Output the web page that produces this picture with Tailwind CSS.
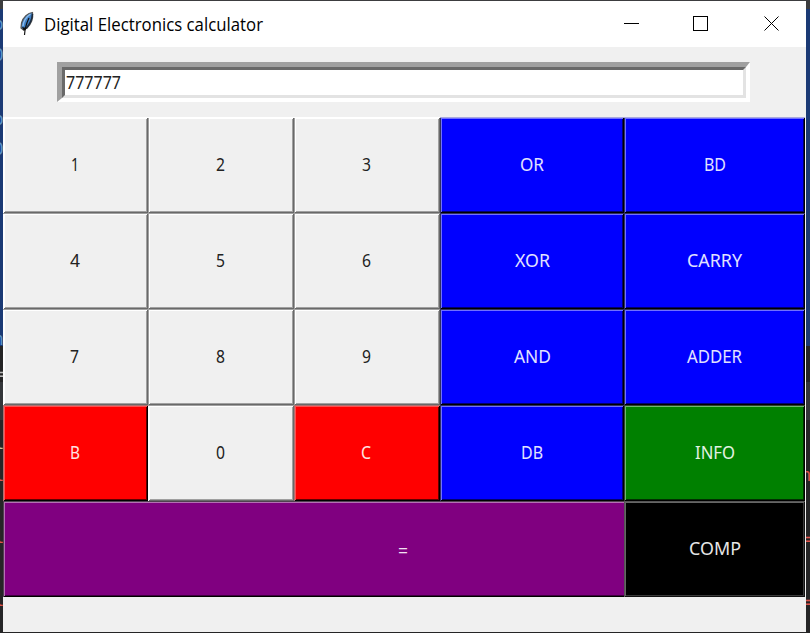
<!DOCTYPE html>
<html lang="en">
<head>
<meta charset="utf-8">
<title>Digital Electronics calculator</title>
<script src="https://cdn.jsdelivr.net/npm/@tailwindcss/browser@4"></script>
</head>
<body class="w-[810px] h-[633px] overflow-hidden bg-[#252526] font-['Noto_Sans','Open_Sans',sans-serif]">
<div class="relative w-[810px] h-[633px] overflow-hidden">
  <!-- editor behind the window -->
  <svg class="absolute inset-0" width="810" height="633" font-family="DejaVu Sans Mono, monospace" font-size="17">
    <rect width="810" height="633" fill="#252526"/>
    <rect width="810" height="9" fill="#3c3d3f"/>
    <rect y="9" width="810" height="337" fill="#1b3a75"/>
    <rect y="382" width="810" height="38" fill="#34363a"/>
    <g fill="#5c94c8"><text x="-6.500" y="30">o</text><text x="-6.500" y="61">0</text><text x="-6.500" y="125">o</text><text x="-6.500" y="155">0</text><text x="-6.500" y="345">n</text></g>
    <text x="-6" y="380" fill="#b9b9b9">=</text><text x="-6" y="449" fill="#c8c0a0">l</text>
    <g fill="#e0564e"><text x="-6" y="481">l</text><text x="-6" y="543">l</text><text x="-6" y="606">l</text><text x="801" y="481">n</text><text x="805" y="545">=</text><text x="805" y="608">=</text></g>
  </svg>
  <main class="relative ml-[3px] mt-px w-[803px] h-[631px] bg-[#f0f0f0] flex flex-col">
    <header class="h-[46px] bg-white flex items-center shrink-0">
      <svg class="ml-[15px] shrink-0" width="20" height="26" viewBox="0 0 20 26">
        <path d="M14.500 1.500C10 2 5 6 3.500 12L3 17L5.500 19L9 17C12 14 15.500 8 14.500 1.500Z" fill="#3f7fc4" stroke="#555" stroke-width="1.200"/>
        <path d="M12.500 3C8 6 5.500 10 5 15" stroke="#8dbdec" stroke-width="1.500" fill="none"/>
        <path d="M14.500 3C14 9 12 13 8.500 17" stroke="#1c2b3d" stroke-width="1.600" fill="none"/>
        <path d="M11 7C8.500 12 7 16 6.500 24" stroke="#111" stroke-width="1.200" fill="none"/>
        <path d="M4 16l2 4 3-3z" fill="#111"/>
      </svg>
      <h1 class="ml-[6px] w-[219px]"><svg class="block overflow-visible" width="219" height="24"><text x="0" y="19" font-family="Open Sans" font-size="17.800" textLength="219" lengthAdjust="spacingAndGlyphs">Digital Electronics calculator</text></svg></h1>
      <svg class="ml-auto mr-[26px]" width="156" height="46" stroke="#000" fill="none" shape-rendering="crispEdges">
        <path d="M0 22.500h15"/><rect x="69.500" y="15.500" width="14" height="14"/><path d="M140.500 15.500l14 14m0-14l-14 14" shape-rendering="auto"/>
      </svg>
    </header>
    <div class="h-[70px] shrink-0 pt-[15px] pl-[54px]">
      <div class="w-[693px] h-[40px] border-t-[5px] border-l-[5px] border-b-[4px] border-r-[4px] border-t-[#a0a0a0] border-l-[#a0a0a0] border-b-white border-r-white">
        <div class="w-full h-full bg-white border-[3px] border-t-[#696969] border-l-[#696969] border-b-[#e3e3e3] border-r-[#e3e3e3] flex items-center pl-px text-black">
          <svg class="block overflow-visible" width="55" height="20"><text x="0" y="16" font-family="Noto Sans" font-size="18" fill="#222" textLength="55" lengthAdjust="spacingAndGlyphs">777777</text></svg>
        </div>
      </div>
    </div>
    <div id="keys" class="grid grid-cols-[145px_146px_146px_184px_181px] grid-rows-[repeat(5,96px)]"></div>
  </main>
</div>
<script>
const light = 'bg-[#f0f0f0] text-[#222] pr-[2px] shadow-[inset_0_1px_0_var(--t),inset_1px_0_0_var(--l),inset_-1px_-1px_0_#696969,inset_2px_2px_0_#fff,inset_-2px_-2px_0_#a0a0a0]';
const blue = 'bg-[#0000ff] text-[#e2e2ff] shadow-[inset_0_1px_0_var(--t),inset_1px_0_0_#303060,inset_-1px_-1px_0_#000,inset_2px_2px_0_#7070ff,inset_-2px_-2px_0_#000070]';
const red = 'bg-[#ff0000] text-[#ffe2e2] pr-[2px] shadow-[inset_1px_1px_0_#b07070,inset_-1px_-1px_0_#000,inset_2px_2px_0_#ff5050,inset_-2px_-2px_0_#600000]';
const green = 'bg-[#008000] text-[#e2f2e2] shadow-[inset_1px_1px_0_#304030,inset_-1px_-1px_0_#000,inset_2px_2px_0_#70b470,inset_-2px_-2px_0_#003000]';
const purple = 'bg-[#800080] text-[#f2e2f2] pr-[2px] shadow-[inset_1px_1px_0_#504050,inset_-1px_-1px_0_#000,inset_2px_2px_0_#b470b4,inset_-2px_-2px_0_#400040]';
const black = 'bg-black text-[#e6e6e6] shadow-[inset_1px_1px_0_#555,inset_-1px_-1px_0_#111,inset_2px_2px_0_#666,inset_-2px_-2px_0_#3a3a3a]';
const keys = [
  ['1',light,8],['2',light,9],['3',light,9],['OR',blue,24],['BD',blue,22],
  ['4',light,10],['5',light,9],['6',light,9],['XOR',blue,35],['CARRY',blue,55],
  ['7',light,9],['8',light,9],['9',light,9],['AND',blue,37],['ADDER',blue,55],
  ['B',red,10],['0',light,9],['C',red,10],['DB',blue,22],['INFO',green,40],
  ['=',purple,10],['COMP',black,52]
];
const grid = document.getElementById('keys');
keys.forEach(([label, cls, w], i) => {
  const b = document.createElement('button');
  const place = label === '=' ? ' row-start-5 col-start-1 col-span-5' : label === 'COMP' ? ' row-start-5 col-start-5' : '';
  // the outer edge of the grid is bright, inner seams are darker
  const top = cls === blue ? (i < 5 ? ' [--t:#a8a8e0]' : ' [--t:#303060]') : (i < 3 ? ' [--t:#fff]' : ' [--t:#a0a0a0]');
  const left = i % 5 === 0 || label === '0' ? ' [--l:#fff]' : ' [--l:#a0a0a0]';
  b.className = 'flex items-center justify-center ' + cls + place + top + left;
  const y = label === '=' ? 18 : 16;
  b.innerHTML = `<svg class="block overflow-visible" width="${w}" height="20"><text x="0" y="${y}" fill="currentColor" font-family="Noto Sans" font-size="17.5" textLength="${w}" lengthAdjust="spacingAndGlyphs">${label}</text></svg>`;
  grid.appendChild(b);
});
</script>
</body>
</html>
